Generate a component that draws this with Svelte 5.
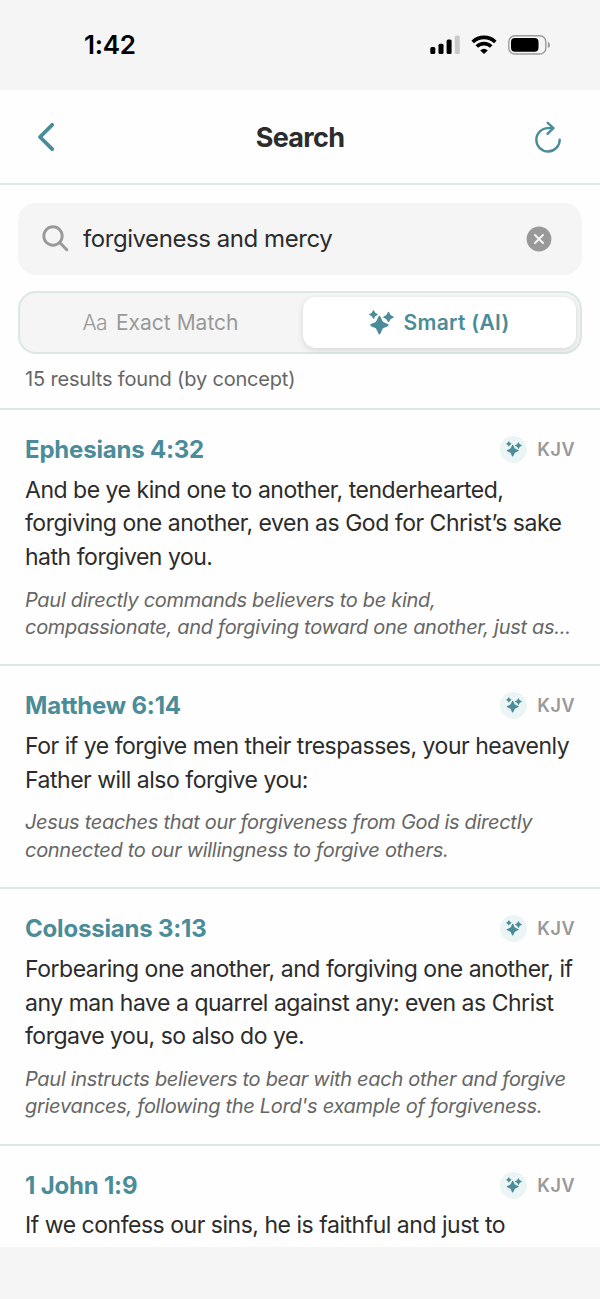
<script>
	let query = $state('forgiveness and mercy');
	let mode = $state('smart');

	const results = [
		{
			ref: 'Ephesians 4:32',
			version: 'KJV',
			text: 'And be ye kind one to another, tenderhearted, forgiving one another, even as God for Christ’s sake hath forgiven you.',
			reason:
				'Paul directly commands believers to be kind, compassionate, and forgiving toward one another, just as...'
		},
		{
			ref: 'Matthew 6:14',
			version: 'KJV',
			text: 'For if ye forgive men their trespasses, your heavenly Father will also forgive you:',
			reason:
				'Jesus teaches that our forgiveness from God is directly connected to our willingness to forgive others.'
		},
		{
			ref: 'Colossians 3:13',
			version: 'KJV',
			text: 'Forbearing one another, and forgiving one another, if any man have a quarrel against any: even as Christ forgave you, so also do ye.',
			reason:
				"Paul instructs believers to bear with each other and forgive grievances, following the Lord's example of forgiveness."
		},
		{
			ref: '1 John 1:9',
			version: 'KJV',
			text: 'If we confess our sins, he is faithful and just to',
			reason: ''
		}
	];
</script>

{#snippet sparkles(size)}
	<svg width={size} height={size} viewBox="0 0 24 24" fill="currentColor">
		<path
			d="M10 5.6 Q10.6 5.6 11 6.5 L12.8 10.4 Q13.2 11.3 14.1 11.7 L18 13.5 Q18.9 14 18.9 14.5 Q18.9 15 18 15.5 L14.1 17.3 Q13.2 17.7 12.8 18.6 L11 22.5 Q10.6 23.4 10 23.4 Q9.4 23.4 9 22.5 L7.2 18.6 Q6.8 17.7 5.9 17.3 L2 15.5 Q1.1 15 1.1 14.5 Q1.1 14 2 13.5 L5.9 11.7 Q6.8 11.3 7.2 10.4 L9 6.5 Q9.4 5.6 10 5.6Z"
		/>
		<path d="M4.3 .3 Q5 .3 5.3 1.5 Q5.7 3 7.2 3.4 Q8.4 3.8 8.4 4.3 Q8.4 4.8 7.2 5.2 Q5.7 5.6 5.3 7.1 Q5 8.3 4.3 8.3 Q3.6 8.3 3.3 7.1 Q2.9 5.6 1.4 5.2 Q.2 4.8 .2 4.3 Q.2 3.8 1.4 3.4 Q2.9 3 3.3 1.5 Q3.6 .3 4.3 .3Z" />
		<path d="M18.7 1.8 Q19.5 1.8 19.8 3.2 Q20.4 5.2 22.3 5.7 Q23.8 6.1 23.8 6.8 Q23.8 7.5 22.3 7.9 Q20.4 8.4 19.8 10.4 Q19.5 11.8 18.7 11.8 Q17.9 11.8 17.6 10.4 Q17 8.4 15.1 7.9 Q13.6 7.5 13.6 6.8 Q13.6 6.1 15.1 5.7 Q17 5.2 17.6 3.2 Q17.9 1.8 18.7 1.8Z" />
	</svg>
{/snippet}

<div class="screen">
	<div class="status">
		<span class="time">1:42</span>
		<div class="status-icons">
			<svg width="31" height="20" viewBox="0 0 31 20">
				<rect x="0.3" y="12" width="5" height="7" rx="1.5" />
				<rect x="8.5" y="8.7" width="5" height="10.3" rx="1.5" />
				<rect x="16.6" y="4.5" width="5" height="14.5" rx="1.5" />
				<rect x="24.8" y="0.5" width="5" height="18.5" rx="1.5" fill="#c9c9c9" />
			</svg>
			<svg class="wifi" width="26" height="20" viewBox="0 0 26 20" fill="none" stroke="#000" stroke-width="3.6">
				<path d="M1.7 7 A16.2 16.2 0 0 1 24.3 7" />
				<path d="M5.8 11.6 A10.2 10.2 0 0 1 20.2 11.6" />
				<path d="M13 19 L9.2 15.4 Q13 12.2 16.8 15.4Z" fill="#000" stroke="none" />
			</svg>
			<svg class="battery" width="43" height="20" viewBox="0 0 43 20">
				<rect x="0.8" y="0.8" width="37" height="18.2" rx="6" fill="none" stroke="#9c9c9c" stroke-width="1.4" />
				<rect x="3" y="3" width="27.5" height="13.8" rx="4" />
				<path d="M39.8 6.8 Q42 7.6 42 9.9 Q42 12.2 39.8 13Z" fill="#9c9c9c" />
			</svg>
		</div>
	</div>

	<header class="header">
		<button class="icon-btn" aria-label="Back">
			<svg width="20" height="30" viewBox="0 0 20 30" fill="none" stroke="currentColor" stroke-width="3.8" stroke-linecap="round" stroke-linejoin="round">
				<path d="M16.2 2.8 L4 15 L16.2 27.2" />
			</svg>
		</button>
		<h1>Search</h1>
		<button class="icon-btn" aria-label="Refresh">
			<svg width="28" height="32" viewBox="0 0 28 32" fill="none" stroke="currentColor" stroke-width="2.4" stroke-linecap="round" stroke-linejoin="round">
				<path d="M19.2 7.1 H14 A11.7 11.7 0 1 0 25.7 18.6" />
				<path d="M13.7 1.8 L19.4 7.1 L13.5 12.8" />
			</svg>
		</button>
	</header>

	<section class="controls">
		<div class="search-box">
			<svg width="27" height="27" viewBox="0 0 27 27" fill="none" stroke="#999" stroke-width="2.9" stroke-linecap="round">
				<circle cx="11" cy="11" r="9.2" />
				<path d="M17.8 17.8 L24.8 24.8" />
			</svg>
			<input bind:value={query} aria-label="Search" />
			<button class="clear" aria-label="Clear" onclick={() => (query = '')}>
				<svg width="26" height="26" viewBox="0 0 26 26">
					<circle cx="13" cy="13" r="12.4" fill="#999" />
					<path d="M9 9 L17 17 M17 9 L9 17" stroke="#f5f5f5" stroke-width="2" stroke-linecap="round" />
				</svg>
			</button>
		</div>

		<div class="tabs">
			<button class="tab exact" class:active={mode === 'exact'} onclick={() => (mode = 'exact')}>
				<span class="aa">Aa</span>
				<span>Exact Match</span>
			</button>
			<button class="tab smart" class:active={mode === 'smart'} onclick={() => (mode = 'smart')}>
				{@render sparkles(25)}
				<span>Smart (AI)</span>
			</button>
		</div>

		<p class="count">15 results found (by concept)</p>
	</section>

	<main class="results">
		{#each results as item}
			<article class="result">
				<div class="result-head">
					<h2>{item.ref}</h2>
					<span class="badge">{@render sparkles(16)}</span>
					<span class="version">{item.version}</span>
				</div>
				<p class="verse">{item.text}</p>
				{#if item.reason}
					<p class="reason">{item.reason}</p>
				{/if}
			</article>
		{/each}
	</main>

	<footer class="bottom"></footer>
</div>

<style>
	:global(body) {
		margin: 0;
		background: #f5f5f5;
	}

	.screen {
		display: flex;
		flex-direction: column;
		width: 600px;
		height: 1299px;
		overflow: hidden;
		background: #fefefe;
		color: #2c2c2c;
		font-family: Inter, 'Liberation Sans', sans-serif;
	}

	h1,
	h2,
	p {
		margin: 0;
	}

	button {
		display: flex;
		align-items: center;
		justify-content: center;
		padding: 0;
		border: none;
		background: none;
		font: inherit;
		color: inherit;
	}

	svg {
		display: block;
		flex: none;
	}

	.status {
		display: flex;
		flex: none;
		align-items: center;
		justify-content: space-between;
		box-sizing: border-box;
		height: 90px;
		padding: 0 49px 0 84px;
		background: #f5f5f5;
		color: #000;
	}

	.time {
		padding-bottom: 2px;
		font-size: 26px;
		font-weight: 600;
		letter-spacing: -0.3px;
	}

	.status-icons {
		display: flex;
		align-items: center;
	}

	.wifi {
		margin-left: 10px;
	}

	.battery {
		margin-left: 11px;
	}

	.header {
		display: flex;
		flex: none;
		align-items: center;
		justify-content: space-between;
		height: 93px;
		padding: 0 38px 0 36px;
		border-bottom: 2px solid #e0e9e8;
	}

	.icon-btn {
		width: 28px;
		color: #4a8c98;
	}

	.icon-btn:first-child {
		justify-content: flex-start;
	}

	h1 {
		padding: 1px 0 0 2px;
		font-size: 27px;
		font-weight: 700;
		letter-spacing: -0.7px;
	}

	.controls {
		flex: none;
		padding: 18px 18px 0;
	}

	.search-box {
		display: flex;
		align-items: center;
		box-sizing: border-box;
		height: 72px;
		padding: 0 30px 1px 24px;
		border-radius: 18px;
		background: #f5f5f5;
	}

	.search-box input {
		flex: 1;
		min-width: 0;
		margin-left: 14px;
		padding: 0;
		border: none;
		outline: none;
		background: none;
		font: inherit;
		font-size: 24px;
		letter-spacing: -0.44px;
		color: #2c2c2c;
	}

	.tabs {
		display: flex;
		gap: 6px;
		box-sizing: border-box;
		height: 63px;
		margin-top: 16px;
		padding: 4px;
		border: 2px solid #dae8e6;
		border-radius: 18px;
		background: #f5f5f5;
	}

	.tab {
		flex: 1;
		border-radius: 13px;
		font-size: 21px;
		color: #999;
	}

	.tab.active {
		background: #fff;
		box-shadow: 0 2px 6px rgba(0, 0, 0, 0.13);
	}

	.exact {
		gap: 9px;
	}

	.aa {
		font-weight: 300;
		letter-spacing: -0.6px;
	}

	.smart {
		gap: 9px;
		font-weight: 600;
		letter-spacing: 0.3px;
		color: #4a8c98;
	}

	.count {
		margin-top: 12px;
		padding: 0 7px;
		font-size: 20px;
		letter-spacing: -0.18px;
		line-height: 26px;
		color: #666;
	}

	.results {
		flex: 1;
		min-height: 0;
		margin-top: 16px;
		overflow: hidden;
	}

	.result {
		padding: 26px 25px 22.6px;
		border-top: 2px solid #dae8e6;
	}

	.result-head {
		display: flex;
		align-items: center;
		height: 27px;
	}

	h2 {
		flex: 1;
		font-size: 24px;
		font-weight: 700;
		letter-spacing: -0.2px;
		color: #4a8c98;
	}

	.badge {
		display: flex;
		align-items: center;
		justify-content: center;
		box-sizing: border-box;
		width: 27px;
		height: 27px;
		padding-bottom: 1px;
		border-radius: 50%;
		background: #ebf5f6;
		color: #4a8c98;
	}

	.version {
		margin-left: 10px;
		font-size: 18px;
		font-weight: 600;
		letter-spacing: 0.5px;
		color: #999;
	}

	.verse {
		margin-right: -4px;
		margin-top: 10.8px;
		font-size: 23px;
		letter-spacing: -0.48px;
		line-height: 33.5px;
	}

	.reason {
		margin-top: 12.3px;
		font-size: 20px;
		font-style: italic;
		letter-spacing: -0.3px;
		line-height: 27.6px;
		color: #666;
	}

	.bottom {
		flex: none;
		height: 52px;
		background: #f5f5f5;
	}
</style>
